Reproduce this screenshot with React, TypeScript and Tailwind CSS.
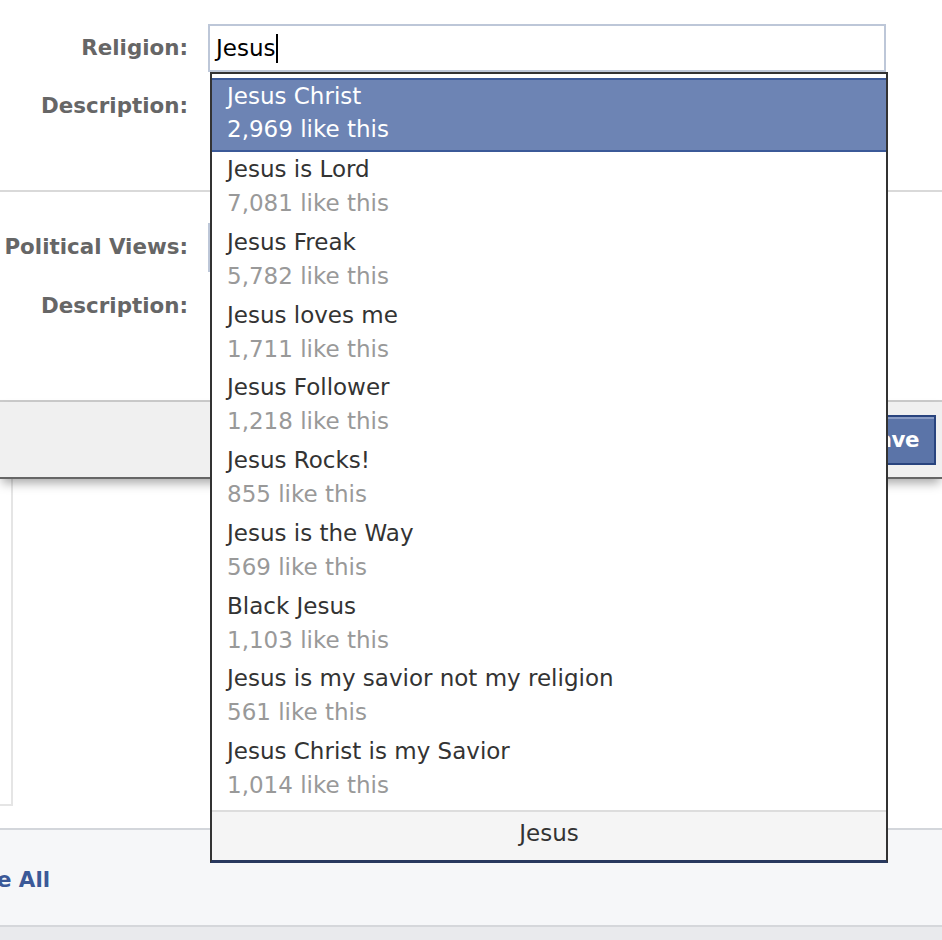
import React from "react";

const items: { name: string; count: string }[] = [
  { name: "Jesus is Lord", count: "7,081 like this" },
  { name: "Jesus Freak", count: "5,782 like this" },
  { name: "Jesus loves me", count: "1,711 like this" },
  { name: "Jesus Follower", count: "1,218 like this" },
  { name: "Jesus Rocks!", count: "855 like this" },
  { name: "Jesus is the Way", count: "569 like this" },
  { name: "Black Jesus", count: "1,103 like this" },
  { name: "Jesus is my savior not my religion", count: "561 like this" },
  { name: "Jesus Christ is my Savior", count: "1,014 like this" },
];

function Label({ children }: { children: React.ReactNode }) {
  return (
    <div className="w-[188px] shrink-0 text-right text-[21.4px] font-bold text-[#666666] whitespace-nowrap">
      {children}
    </div>
  );
}

export default function App() {
  return (
    <div className="relative w-[942px] h-[940px] overflow-hidden bg-white font-['DejaVu_Sans',sans-serif]">
      {/* Section 1 */}
      <div className="h-[192px] border-b-2 border-[#d9d9d9] pt-[24px]">
        <div className="flex items-center gap-[20px]">
          <Label>Religion:</Label>
          <div className="w-[678px] h-[48px] border-2 border-[#bdc7d8] flex items-center pl-[6px] text-[23px] text-black">
            <span>Jesus</span>
            <span className="inline-block w-[2px] h-[29px] bg-black ml-[1px]" />
          </div>
        </div>
        <div className="flex items-center gap-[20px] mt-[19px] h-[30px]">
          <Label>Description:</Label>
        </div>
      </div>

      {/* Section 2 */}
      <div className="h-[210px] border-b-2 border-[#cccccc] pt-[31px]">
        <div className="flex items-center gap-[20px]">
          <Label>Political Views:</Label>
          <div className="w-[678px] h-[49px] border-2 border-[#bdc7d8]" />
        </div>
        <div className="flex items-center gap-[20px] mt-[19px] h-[30px]">
          <Label>Description:</Label>
        </div>
      </div>

      {/* Footer bar with Save */}
      <div className="relative z-10 h-[77px] bg-[#f0f0f0] border-b-2 border-[#666666] flex items-center justify-end pr-[6px] shadow-[0_6px_10px_-2px_rgba(0,0,0,0.35)]">
        <button className="h-[50px] pl-[15px] pr-[15px] border-2 border-[#29447e] bg-[#5b74a8] shadow-[inset_0_2px_0_#8a9cc4] text-white font-bold text-[21.4px] leading-none tracking-[-0.5px]">
          Save
        </button>
      </div>

      {/* Section 4 */}
      <div className="h-[349px] bg-white">
        <div className="w-[13px] h-[327px] border-r-2 border-b-2 border-[#e5e5e5]" />
      </div>

      {/* Section 5 */}
      <div className="h-[97px] border-t-2 border-[#d3d6db] bg-[#f6f7f9] flex items-center pt-[6px]">
        <span className="ml-[-33px] text-[21.4px] font-bold text-[#3b5998] whitespace-nowrap">
          See All
        </span>
      </div>
      <div className="h-[20px] border-t-2 border-[#d5d7db] bg-[#e9eaed]" />

      {/* Dropdown */}
      <div className="absolute left-[210px] top-[72px] w-[678px] z-20 bg-white border-t-2 border-x-2 border-[#333333] border-b-[3px] border-b-[#29395f] text-[23px]">
        <div className="pt-[4px] pb-[3px]">
          <div className="border-y-2 border-[#3b5998] bg-[#6d84b4] pl-[15px] pb-[4px] text-white h-[74px]">
            <div className="leading-[32px]">Jesus Christ</div>
            <div className="leading-[34px]">2,969 like this</div>
          </div>
          {items.map((it) => (
            <div key={it.name} className="h-[72.75px] pl-[15px] whitespace-nowrap">
              <div className="leading-[34px] text-[#333333]">{it.name}</div>
              <div className="leading-[34px] text-[#999999]">{it.count}</div>
            </div>
          ))}
        </div>
        <div className="h-[50px] border-t-2 border-[#dddddd] bg-[#f5f5f5] flex items-center justify-center pb-[5px] text-[#333333]">
          Jesus
        </div>
      </div>
    </div>
  );
}
